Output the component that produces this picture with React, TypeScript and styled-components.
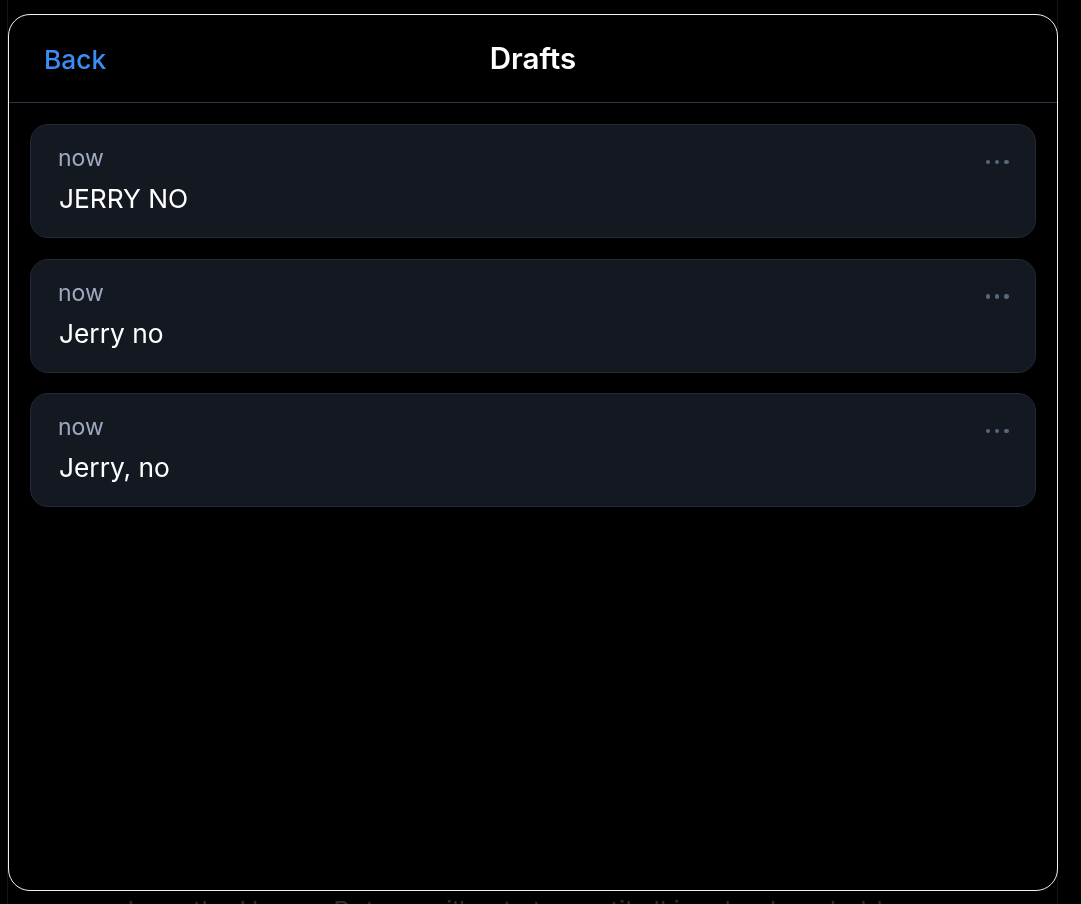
import React from "react";
import styled, { createGlobalStyle } from "styled-components";

const GlobalStyle = createGlobalStyle`
  html, body {
    margin: 0;
    padding: 0;
    background: #000;
    height: 100%;
    overflow: hidden;
  }
  body {
    font-family: Inter, "Noto Sans", "Liberation Sans", sans-serif;
    -webkit-font-smoothing: antialiased;
  }
`;

const Page = styled.div`
  height: 904px;
  overflow: hidden;
  margin: 0 23px 0 7px;
  border-left: 1px solid #161616;
  border-right: 1px solid #161616;
`;

const Article = styled.p`
  margin: 0;
  padding: 893px 0 0 110px;
  font-size: 26px;
  line-height: 36px;
  color: #2e2e2e;
  white-space: nowrap;
`;

const Modal = styled.div`
  position: fixed;
  top: 14px;
  left: 8px;
  width: 1050px;
  height: 877px;
  box-sizing: border-box;
  border: 1.5px solid #f2f2f2;
  border-radius: 22px;
  background: #000;
  display: flex;
  flex-direction: column;
  overflow: hidden;
`;

const Header = styled.header`
  flex: none;
  height: 87px;
  display: grid;
  grid-template-columns: 1fr auto 1fr;
  align-items: center;
  padding: 0 35px;
  border-bottom: 1px solid #2b3548;
`;

const BackButton = styled.button`
  justify-self: start;
  background: none;
  border: none;
  padding: 0;
  font-family: inherit;
  font-size: 26.3px;
  font-weight: 500;
  color: #3b8df6;
  cursor: pointer;
  margin-top: 2px;
`;

const Title = styled.h1`
  margin: 0 0 2px;
  font-size: 29.5px;
  font-weight: 600;
  color: #fff;
`;

const List = styled.div`
  display: flex;
  flex-direction: column;
  gap: 20.5px;
  padding: 21px 21px 0 21px;
`;

const Card = styled.div`
  box-sizing: border-box;
  height: 114px;
  border: 1px solid #222a38;
  border-radius: 18px;
  background: #131821;
  padding: 16px 26px 0 27px;
  display: flex;
  flex-direction: column;
  gap: 6px;
`;

const CardTop = styled.div`
  display: flex;
  align-items: center;
  justify-content: space-between;
`;

const Time = styled.span`
  font-size: 23px;
  line-height: 34px;
  color: #9ea9c0;
`;

const Dots = styled.div`
  display: flex;
  gap: 4.6px;
  margin-top: 8px;
  margin-right: 0.5px;
`;

const Dot = styled.span`
  width: 4.6px;
  height: 4.6px;
  border-radius: 50%;
  background: #58667e;
`;

const Body = styled.div`
  font-size: 26.3px;
  line-height: 36px;
  color: #fff;
  padding-left: 1px;
`;

const drafts = ["JERRY NO", "Jerry no", "Jerry, no"];

export default function App() {
  return (
    <>
      <GlobalStyle />
      <Page>
        <Article>
          down the House. But we will not stop until all involved are held
        </Article>
      </Page>
      <Modal>
        <Header>
          <BackButton>Back</BackButton>
          <Title>Drafts</Title>
          <span />
        </Header>
        <List>
          {drafts.map((d) => (
            <Card key={d}>
              <CardTop>
                <Time>now</Time>
                <Dots>
                  <Dot />
                  <Dot />
                  <Dot />
                </Dots>
              </CardTop>
              <Body>{d}</Body>
            </Card>
          ))}
        </List>
      </Modal>
    </>
  );
}
